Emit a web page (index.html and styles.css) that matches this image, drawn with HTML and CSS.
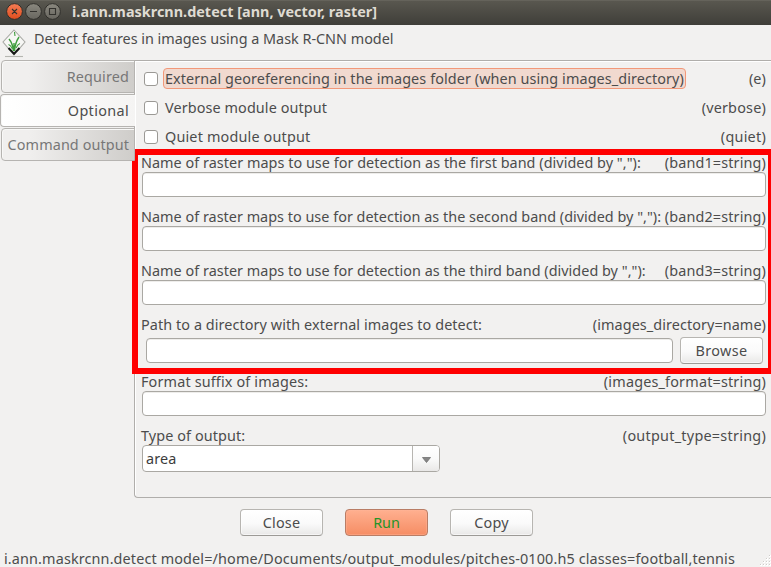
FILE: index.html
```html
<!DOCTYPE html>
<html lang="en">
<head>
<meta charset="utf-8">
<title>i.ann.maskrcnn.detect [ann, vector, raster]</title>
<link rel="stylesheet" href="styles.css">
</head>
<body>
<div class="window">
  <header class="titlebar">
    <svg class="controls" width="62" height="25" viewBox="0 0 62 25">
      <defs>
        <linearGradient id="red" x1="0" y1="0" x2="0" y2="1"><stop offset="0" stop-color="#f47c54"/><stop offset="1" stop-color="#e14d1e"/></linearGradient>
        <linearGradient id="grey" x1="0" y1="0" x2="0" y2="1"><stop offset="0" stop-color="#8a887f"/><stop offset="1" stop-color="#68665f"/></linearGradient>
      </defs>
      <g stroke="#302f2b" stroke-width="1">
        <circle cx="14.5" cy="11.5" r="7.9" fill="url(#red)"/>
        <circle cx="33.5" cy="11.5" r="7.9" fill="url(#grey)"/>
        <circle cx="52.5" cy="11.5" r="7.9" fill="url(#grey)"/>
      </g>
      <g fill="none" stroke="#33322e" stroke-width="1.1">
        <path d="M12 9l5 5M17 9l-5 5M30 11.5h7M49.5 8.5h6v6h-6z"/>
      </g>
    </svg>
    <span class="title">i.ann.maskrcnn.detect [ann, vector, raster]</span>
  </header>

  <div class="intro">
    <svg class="logo" width="26" height="30" viewBox="0 0 26 30">
      <path d="M12 2L23 14L12 27L1 14Z" fill="#f7f7f5" stroke="#a9aaa5" stroke-width="1.1"/>
      <path d="M6.500 20L12 25.800L17.500 20" fill="none" stroke="#161816" stroke-width="2"/>
      <path d="M3 28.500h18" stroke="#b5b6b1" stroke-width="1.1"/>
      <g fill="none" stroke="#3f9e3d" stroke-width="1.4">
        <path d="M11.500 23Q10.500 15 7 11M12.500 23Q13 15 17 9M12 22V15"/>
        <path d="M10.500 21Q8.500 17 6.500 16.500M14 20Q16 16 18 15.500M12.500 4l.5 4" stroke-width="1.1"/>
      </g>
    </svg>
    <span class="summary">Detect features in images using a Mask R-CNN model</span>
  </div>

  <main class="notebook">
    <nav class="tabs">
      <div class="tab required">Required</div>
      <div class="tab optional active">Optional</div>
      <div class="tab command">Command output</div>
    </nav>
    <section class="panel">
      <div class="check"><i class="box"></i><span class="focus external">External georeferencing in the images folder (when using images_directory)</span><span class="key">(e)</span></div>
      <div class="check"><i class="box"></i><span class="name">Verbose module output</span><span class="key verbose">(verbose)</span></div>
      <div class="check"><i class="box"></i><span class="name quiet">Quiet module output</span><span class="key quiet-key">(quiet)</span></div>

      <div class="field">
        <div class="label"><span class="first">Name of raster maps to use for detection as the first band (divided by ","):</span><span class="band">(band1=string)</span></div>
        <div class="input"></div>
      </div>
      <div class="field">
        <div class="label"><span class="second">Name of raster maps to use for detection as the second band (divided by ","):</span><span class="band">(band2=string)</span></div>
        <div class="input"></div>
      </div>
      <div class="field">
        <div class="label"><span class="third">Name of raster maps to use for detection as the third band (divided by ","):</span><span class="band">(band3=string)</span></div>
        <div class="input"></div>
      </div>
      <div class="field directory">
        <div class="label"><span class="path">Path to a directory with external images to detect:</span><span class="path">(images_directory=name)</span></div>
        <div class="browse-row"><div class="input"></div><div class="button browse">Browse</div></div>
      </div>
      <div class="field">
        <div class="label"><span class="format">Format suffix of images:</span><span class="format-key">(images_format=string)</span></div>
        <div class="input"></div>
      </div>
      <div class="field">
        <div class="label"><span class="type">Type of output:</span><span class="type-key">(output_type=string)</span></div>
        <div class="combo"><span class="value">area</span><span class="arrow"><svg width="9" height="6" viewBox="0 0 9 6"><path d="M.5.5h8L4.500 5.500Z" fill="#858585" stroke="#707070" stroke-width=".8"/></svg></span></div>
      </div>
      <div class="highlight"></div>
    </section>
  </main>

  <div class="actions">
    <div class="button close">Close</div>
    <div class="button run">Run</div>
    <div class="button copy">Copy</div>
  </div>

  <footer class="status">
    <span>i.ann.maskrcnn.detect model=/home/Documents/output_modules/pitches-0100.h5 classes=football,tennis</span>
    <svg class="grip" width="12" height="12" viewBox="0 0 12 12"><path d="M10 1h2M7 4h2M10 4h2M4 7h2M7 7h2M10 7h2M1 10h2M4 10h2M7 10h2M10 10h2" stroke="#fff" stroke-width="2"/><path d="M10 .5h1M7 3.500h1M10 3.500h1M4 6.500h1M7 6.500h1M10 6.500h1M1 9.500h1M4 9.500h1M7 9.500h1M10 9.500h1" stroke="#cfcdca"/></svg>
  </footer>
</div>
</body>
</html>
```
FILE: styles.css
```css
* { box-sizing: border-box; }
body {
  margin: 0;
  font: 14.4px/20px "Noto Sans", sans-serif;
  color: #4c4c4c;
  background: #f2f1f0;
}
.window {
  display: flex;
  flex-direction: column;
  width: 771px;
  height: 567px;
  overflow: hidden;
  white-space: nowrap;
}
.titlebar {
  display: flex;
  flex: none;
  height: 25px;
  background: linear-gradient(#59574f, #3f3e39);
  border-top: 1px solid #65635b;
}
.controls { flex: none; margin-top: -1px; }
.title {
  margin-left: 10px;
  line-height: 22px;
  font-weight: bold;
  letter-spacing: .02px;
  color: #dfdbd2;
}
.intro { display: flex; flex: none; height: 35px; padding-left: 2px; }
.logo { flex: none; margin-top: 3px; }
.summary { margin: 4px 0 0 6px; letter-spacing: -.01px; }

.notebook { display: flex; flex: none; height: 438px; }
.tabs { flex: none; width: 135px; z-index: 1; }
.tab {
  height: 33px;
  margin: 0 0 1px 1px;
  padding: 0 5px 0 0;
  border: 1px solid #b6b4b1;
  border-radius: 4px 0 0 4px;
  box-shadow: inset 1px 1px #f8f8f7;
  background: linear-gradient(90deg, #f0efee 20%, #cfcdca);
  line-height: 31px;
  text-align: right;
  color: #777;
}
.tab.active {
  margin-left: 0;
  border-right: 0;
  padding-right: 6px;
  background: linear-gradient(90deg, #fff, #f5f4f3);
  color: #4c4c4c;
}
.required { letter-spacing: .15px; }
.optional { letter-spacing: .35px; }
.command { letter-spacing: .1px; }

.panel {
  position: relative;
  flex: 1;
  margin-left: -1px;
  padding: 3px 5px 0 7px;
  border: solid #b0aeab;
  border-width: 1px 0 1px 1px;
  border-bottom-left-radius: 4px;
  box-shadow: inset 1px 1px #fff;
}
.check { display: flex; align-items: center; height: 29px; padding-left: 2px; }
.box {
  width: 14px;
  height: 14px;
  margin-right: 5px;
  border: 1px solid #9b9995;
  border-radius: 3px;
  background: #fff;
}
.focus, .name { padding: 0 1px; border: 1px solid transparent; letter-spacing: .1px; }
.focus { height: 21px; line-height: 19px; border-color: #f29879; border-radius: 4px; background: #f1d9cf; }
.external { letter-spacing: .09px; }
.quiet { letter-spacing: .17px; }
.key { margin-left: auto; letter-spacing: .1px; }
.verbose { letter-spacing: .2px; }
.quiet-key { letter-spacing: .25px; }

.field { height: 54px; padding-top: 2px; }
.label { display: flex; justify-content: space-between; height: 19px; margin-left: -1px; line-height: 19px; }
.first { letter-spacing: .04px; }
.second { letter-spacing: .02px; }
.third { letter-spacing: .03px; }
.band { letter-spacing: .14px; }
.path { letter-spacing: .08px; }
.format { letter-spacing: .15px; }
.format-key { letter-spacing: .18px; }
.type { letter-spacing: .1px; }
.type-key { letter-spacing: .26px; }
.input {
  height: 25px;
  border: 1px solid #aaa8a3;
  border-radius: 4px;
  background: #fff;
  box-shadow: inset 0 1px #eeedeb;
}
.directory { height: 57px; }
.browse-row { display: flex; align-items: center; gap: 7px; padding: 3px 3px 0 4px; }
.browse-row .input { flex: 1; }
.button {
  flex: none;
  width: 83px;
  height: 27px;
  border: 1px solid #b7b5b1;
  border-bottom-color: #9c9a96;
  border-radius: 4px;
  background: linear-gradient(#fff, #fafafa 55%, #e9e8e7);
  box-shadow: inset 0 0 0 1px #ffffff90;
  text-align: center;
  line-height: 25px;
}
.browse { letter-spacing: .4px; }
.close { letter-spacing: .2px; }
.copy { letter-spacing: .15px; }
.run {
  margin: 0 22px;
  border-color: #b97d65;
  background: linear-gradient(#ffb090, #f68d64);
  box-shadow: inset 0 0 0 1px #ffb59870;
  letter-spacing: -.1px;
  color: #259428;
}
.combo {
  display: flex;
  width: 298px;
  height: 27px;
  border: 1px solid #aaa8a3;
  border-radius: 4px;
  background: #fff;
  overflow: hidden;
}
.value { flex: 1; padding-left: 3px; line-height: 25px; letter-spacing: .1px; color: #3c3c3c; }
.arrow {
  display: flex;
  align-items: center;
  justify-content: center;
  width: 27px;
  padding-top: 2px;
  border-left: 1px solid #b7b5b1;
  background: linear-gradient(#fff, #fafafa 50%, #e9e8e7);
}
.highlight {
  position: absolute;
  top: 88px;
  left: -3px;
  right: 0;
  height: 225px;
  border: solid #f00;
  border-width: 6px 3px 6px 6px;
}
.actions { display: flex; flex: none; height: 51px; padding: 11px 0 0 240px; }
.status { display: flex; justify-content: space-between; height: 18px; padding-left: 4px; letter-spacing: .135px; }
.grip { flex: none; margin-top: 6px; }
```
